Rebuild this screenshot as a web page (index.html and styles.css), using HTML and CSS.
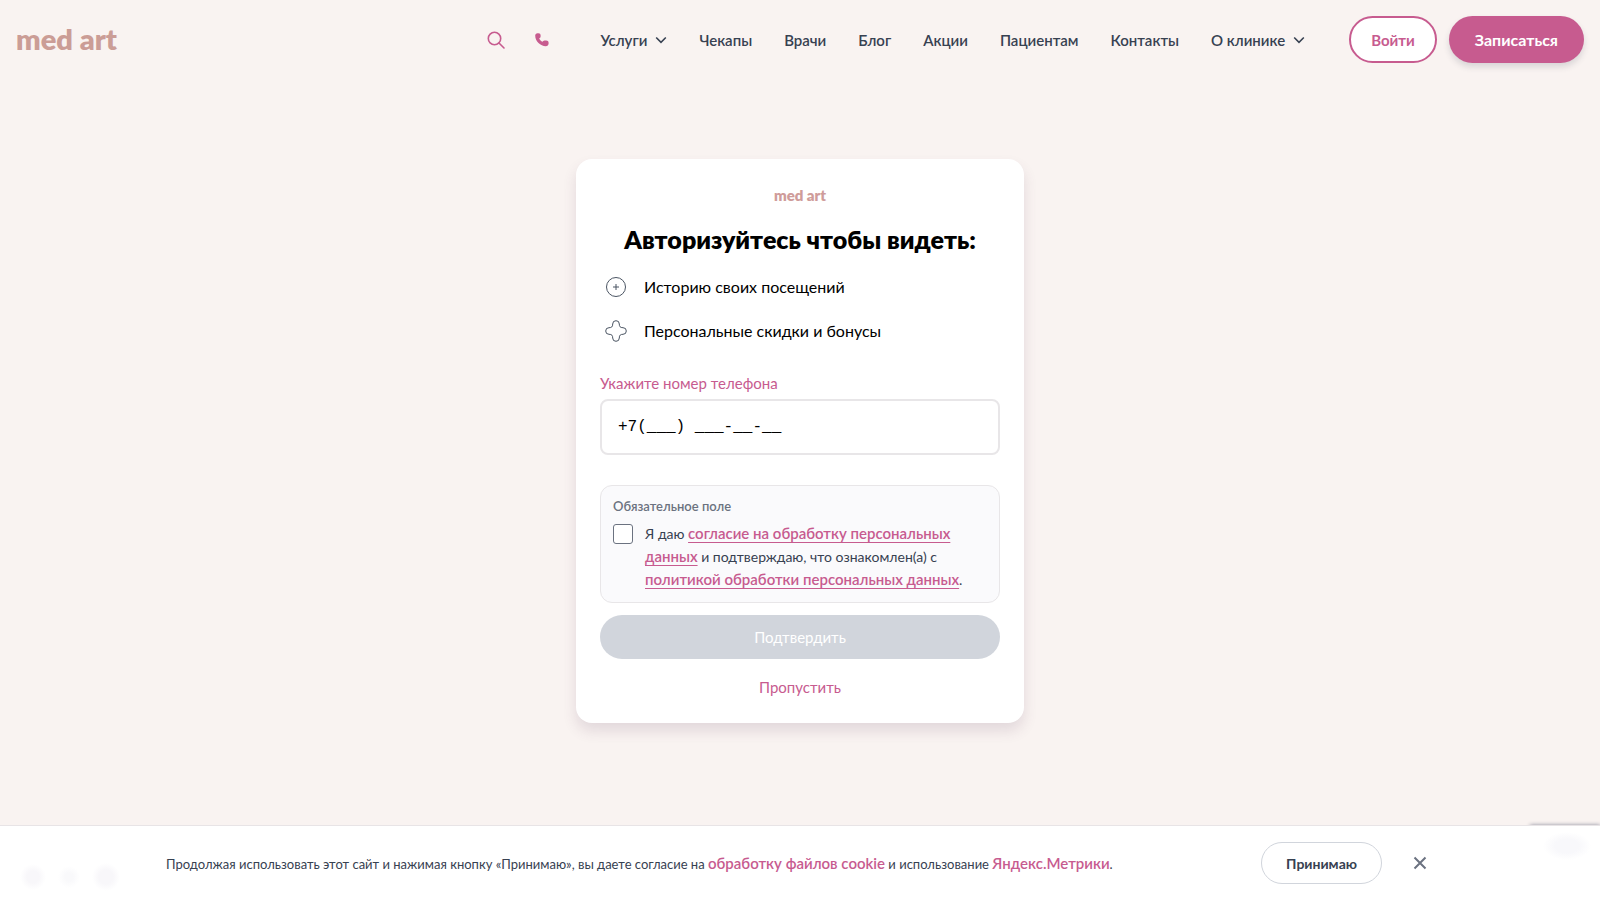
FILE: index.html
```html
<!DOCTYPE html>
<html lang="ru">
<head>
  <meta charset="UTF-8">
  <meta name="viewport" content="width=device-width, initial-scale=1">
  <title>Авторизация | med art</title>
  <link rel="stylesheet" href="styles.css">
</head>
<body>
  <header class="header">
    <a class="logo" href="#">med art</a>

    <div class="header-icons">
      <button class="icon-btn" type="button" aria-label="Поиск">
        <svg width="20" height="20" viewBox="0 0 20 20" fill="none" stroke="currentColor" stroke-width="1.6" stroke-linecap="round">
          <circle cx="8.5" cy="8.5" r="6.2"/>
          <path d="M13 13l5 5"/>
        </svg>
      </button>
      <a class="icon-btn" href="#" aria-label="Позвонить">
        <svg width="16" height="16" viewBox="0 0 16 16" fill="currentColor">
          <path d="M1.2 3.6C1.2 2.200 2.100 1.200 3.500 1.200h1c1.300 0 2.100.8 2.100 2v1.200c0 .7-.3 1.200-.9 1.600l-.5.4c.7 1.500 1.800 2.600 3.300 3.400l.5-.5c.4-.5.9-.7 1.600-.7h1.500c1.500 0 2.500.8 2.500 2.100v.9c0 1.600-1.200 2.600-2.800 2.600C6.500 14.200 1.200 9.500 1.200 3.600z"/>
        </svg>
      </a>
    </div>

    <nav class="nav">
      <a href="#">Услуги
        <svg class="chevron" width="12" height="8" viewBox="0 0 12 8"><path d="M1.2 1.5L6 6.3l4.8-4.8"/></svg>
      </a>
      <a href="#">Чекапы</a>
      <a href="#">Врачи</a>
      <a href="#">Блог</a>
      <a href="#">Акции</a>
      <a href="#">Пациентам</a>
      <a href="#">Контакты</a>
      <a href="#">О клинике
        <svg class="chevron" width="12" height="8" viewBox="0 0 12 8"><path d="M1.2 1.5L6 6.3l4.8-4.8"/></svg>
      </a>
    </nav>

    <div class="header-actions">
      <button class="btn btn-outline" type="button">Войти</button>
      <button class="btn btn-primary" type="button">Записаться</button>
    </div>
  </header>

  <main class="main">
    <form class="card">
      <div class="card-logo">med art</div>
      <h1>Авторизуйтесь чтобы видеть:</h1>

      <ul class="benefits">
        <li>
          <svg width="24" height="24" viewBox="0 0 24 24">
            <circle cx="12" cy="12" r="9.5"/>
            <path d="M12 9v6M9 12h6"/>
          </svg>
          Историю своих посещений
        </li>
        <li>
          <svg width="24" height="24" viewBox="0 0 24 24">
            <path d="M8.7 5a3.3 3.3 0 0 1 6.6 0c0 2.5.8 3.7 3.7 3.7a3.3 3.3 0 0 1 0 6.6c-2.5 0-3.7.8-3.7 3.7a3.3 3.3 0 0 1-6.6 0c0-2.5-.8-3.7-3.7-3.7a3.3 3.3 0 0 1 0-6.6c2.5 0 3.7-.8 3.7-3.7z"/>
          </svg>
          Персональные скидки и бонусы
        </li>
      </ul>

      <label class="phone-label" for="phone">Укажите номер телефона</label>
      <input class="phone-input" id="phone" type="tel" value="+7(___) ___-__-__">

      <div class="consent">
        <div class="consent-title">Обязательное поле</div>
        <div class="consent-row">
          <input type="checkbox" id="agree">
          <label for="agree">Я даю <a href="#">согласие на обработку персональных данных</a> и подтверждаю, что ознакомлен(а) с <a href="#">политикой обработки персональных данных</a>.</label>
        </div>
      </div>

      <button class="submit" type="submit" disabled>Подтвердить</button>
      <a class="skip" href="#">Пропустить</a>
    </form>
  </main>

  <div class="badge"></div>

  <div class="cookie">
    <div class="cookie-blur" aria-hidden="true"></div>
    <div class="cookie-inner">
      <p>Продолжая использовать этот сайт и нажимая кнопку «Принимаю», вы даете согласие на <a href="#">обработку файлов cookie</a> и использование <a href="#">Яндекс.Метрики</a>.</p>
      <button class="cookie-accept" type="button">Принимаю</button>
      <button class="cookie-close" type="button" aria-label="Закрыть">
        <svg width="20" height="20" viewBox="0 0 20 20"><path d="M4.5 4.5l11 11M15.5 4.5l-11 11"/></svg>
      </button>
    </div>
  </div>
</body>
</html>
```
FILE: styles.css
```css
* {
  box-sizing: border-box;
}
body {
  margin: 0;
  min-height: 100vh;
  background: #f9f3f1;
  color: #000;
  font-family: Lato, "Open Sans", sans-serif;
  font-size: 16px;
  line-height: 24px;
}
a {
  color: #c75b8f;
  text-decoration: none;
}
button {
  font-family: inherit;
  cursor: pointer;
}

/* header */
.header {
  display: flex;
  align-items: center;
  padding: 16px;
}
.logo {
  margin-right: auto;
  padding-bottom: 2px;
  color: #cb9d96;
  font-size: 29px;
  font-weight: 800;
}
.header-icons {
  display: flex;
  align-items: center;
  gap: 28px;
  margin-right: 50px;
}
.icon-btn {
  display: flex;
  padding: 0;
  border: 0;
  background: none;
  color: #c75b8f;
}
.nav {
  display: flex;
  gap: 32px;
  margin-right: 44px;
}
.nav a {
  display: flex;
  align-items: center;
  gap: 8px;
  color: #374151;
  font-size: 15px;
  font-weight: 600;
}
.chevron {
  fill: none;
  stroke: currentColor;
  stroke-width: 1.6;
}
.header-actions {
  display: flex;
  gap: 12px;
}
.btn {
  height: 47px;
  border-radius: 24px;
  font-size: 15px;
  font-weight: 700;
}
.btn-outline {
  padding: 0 20px;
  border: 2px solid #c75b8f;
  background: #fff;
  color: #c75b8f;
}
.btn-primary {
  padding: 0 26px;
  border: 0;
  background: #c75b8f;
  color: #fff;
  font-size: 16px;
  box-shadow: 0 4px 6px rgba(55, 65, 81, 0.16);
}

/* login card */
.main {
  display: flex;
  justify-content: center;
  padding: 80px 16px 176px;
}
.card {
  display: flex;
  flex-direction: column;
  width: 100%;
  max-width: 448px;
  padding: 24px;
  border-radius: 16px;
  background: #fff;
  box-shadow: 0 8px 14px rgba(90, 60, 90, 0.14);
}
.card-logo {
  color: #cf9c9a;
  font-size: 15px;
  font-weight: 800;
  text-align: center;
}
h1 {
  margin: 16px 0 20px;
  font-size: 25px;
  font-weight: 800;
  line-height: 32px;
  text-align: center;
}
.benefits {
  display: flex;
  flex-direction: column;
  gap: 20px;
  margin: 0 0 28px;
  padding: 0;
  list-style: none;
}
.benefits li {
  display: flex;
  gap: 16px;
  padding-left: 4px;
}
.benefits svg {
  fill: none;
  stroke: #4b5563;
  stroke-width: 1;
}
.phone-label {
  margin-bottom: 4px;
  color: #c75b8f;
  font-size: 15px;
}
.phone-input {
  height: 56px;
  margin-bottom: 30px;
  padding: 0 16px;
  border: 2px solid #e8e6e8;
  border-radius: 8px;
  background: #fff;
  font-family: "Liberation Mono", monospace;
  font-size: 16px;
}
.consent {
  margin-bottom: 12px;
  padding: 12px 12px 11px;
  border: 1px solid #e8e6e8;
  border-radius: 12px;
  background: #fafafc;
  color: #374151;
}
.consent-title {
  margin-bottom: 8px;
  color: #6b7280;
  font-size: 13px;
  font-weight: 600;
  line-height: 16px;
}
.consent-row {
  display: flex;
  gap: 12px;
  font-size: 14px;
  line-height: 23px;
}
.consent-row input {
  appearance: none;
  flex: none;
  width: 20px;
  height: 20px;
  margin: 2px 0 0;
  border: 1px solid #6b7280;
  border-radius: 3px;
  background: #fff;
}
.consent-row input:checked {
  background: #c75b8f;
}
.consent-row a {
  font-size: 15px;
  font-weight: 600;
  text-decoration: underline;
  text-underline-offset: 3px;
}
.submit {
  height: 44px;
  margin-bottom: 16px;
  border: 0;
  border-radius: 22px;
  background: #d1d5dc;
  color: #fff;
  font-size: 15px;
}
.skip {
  align-self: center;
  font-size: 15px;
}

/* cookie banner */
.badge {
  position: fixed;
  right: 0;
  bottom: 14px;
  width: 70px;
  height: 61px;
  box-shadow: 0 0 4px #8c8c9c;
}
.cookie {
  position: fixed;
  right: 0;
  bottom: 0;
  left: 0;
  border-top: 1px solid #e8e4e6;
  background: #fff;
  font-size: 13px;
}
.cookie-blur {
  position: absolute;
  inset: 0;
  background:
    radial-gradient(circle at 33px 51px, #f8f7fa 6px, transparent 13px),
    radial-gradient(circle at 69px 51px, #f9f9fb 4px, transparent 11px),
    radial-gradient(circle at 106px 51px, #f8f7fa 7px, transparent 14px),
    radial-gradient(ellipse 24px 14px at calc(100% - 33px) 20px, #f8f8fb 50%, transparent);
}
.cookie-inner {
  position: relative;
  display: flex;
  align-items: center;
  max-width: 1280px;
  margin: 0 auto;
  padding: 16px 6px;
}
.cookie p {
  flex: 1;
  margin: 0;
  color: #374151;
}
.cookie a {
  font-size: 15px;
  font-weight: 600;
}
.cookie-accept {
  height: 42px;
  margin-right: 24px;
  padding: 0 24px;
  border: 1px solid #d1d5dc;
  border-radius: 21px;
  background: transparent;
  color: #374151;
  font-size: 14px;
  font-weight: 700;
}
.cookie-close {
  display: flex;
  padding: 4px;
  border: 0;
  background: none;
}
.cookie-close path {
  fill: none;
  stroke: #6b7280;
  stroke-width: 2;
}
```
